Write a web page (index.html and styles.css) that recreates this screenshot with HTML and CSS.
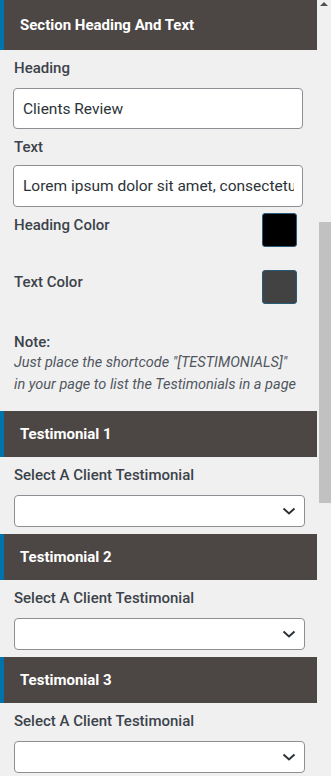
FILE: index.html
```html
<!DOCTYPE html>
<html lang="en">
<head>
    <meta charset="UTF-8">
    <meta name="viewport" content="width=device-width, initial-scale=1.0">
    <title>Testimonials</title>
    <link rel="stylesheet" href="styles.css">
</head>
<body>
    <div class="customizer">
        <div class="panel">
            <div class="section-title first">Section Heading And Text</div>
            <div class="field">
                <label class="field-label" for="heading">Heading</label>
                <input class="text-input" type="text" id="heading" value="Clients Review">
            </div>
            <div class="field">
                <label class="field-label" for="text">Text</label>
                <input class="text-input" type="text" id="text" value="Lorem ipsum dolor sit amet, consectetur adipiscing elit.">
            </div>
            <div class="color-row">
                <span class="field-label">Heading Color</span>
                <span class="swatch swatch-black"></span>
            </div>
            <div class="color-row">
                <span class="field-label">Text Color</span>
                <span class="swatch swatch-gray"></span>
            </div>
            <div class="note">
                <div class="field-label">Note:</div>
                <p>Just place the shortcode "[TESTIMONIALS]"<br>in your page to list the Testimonials in a page</p>
            </div>

            <div class="section-title">Testimonial 1</div>
            <div class="field">
                <label class="field-label" for="t1">Select A Client Testimonial</label>
                <div class="select-wrap">
                    <select id="t1"><option></option></select>
                    <svg class="chevron" width="14" height="8" viewBox="0 0 14 8"><path d="M1.5 1.5 L7 6.5 L12.5 1.5" fill="none" stroke="#2c3338" stroke-width="2"/></svg>
                </div>
            </div>

            <div class="section-title">Testimonial 2</div>
            <div class="field">
                <label class="field-label" for="t2">Select A Client Testimonial</label>
                <div class="select-wrap">
                    <select id="t2"><option></option></select>
                    <svg class="chevron" width="14" height="8" viewBox="0 0 14 8"><path d="M1.5 1.5 L7 6.5 L12.5 1.5" fill="none" stroke="#2c3338" stroke-width="2"/></svg>
                </div>
            </div>

            <div class="section-title">Testimonial 3</div>
            <div class="field">
                <label class="field-label" for="t3">Select A Client Testimonial</label>
                <div class="select-wrap">
                    <select id="t3"><option></option></select>
                    <svg class="chevron" width="14" height="8" viewBox="0 0 14 8"><path d="M1.5 1.5 L7 6.5 L12.5 1.5" fill="none" stroke="#2c3338" stroke-width="2"/></svg>
                </div>
            </div>
        </div>
        <div class="scrollbar">
            <div class="scroll-arrow"></div>
            <div class="scroll-thumb"></div>
        </div>
    </div>
</body>
</html>
```

FILE: styles.css
```css
* {
    box-sizing: border-box;
}

html,
body {
    margin: 0;
    padding: 0;
    height: 776px;
    overflow: hidden;
}

body {
    background: #f0f0f1;
    font-family: Roboto, "Noto Sans", sans-serif;
    color: #3c434a;
}

.customizer {
    display: flex;
    height: 776px;
}

.panel {
    width: 317px;
    flex: none;
}

.section-title {
    height: 46px;
    display: flex;
    align-items: center;
    padding-left: 16px;
    margin-top: 15px;
    background: #4c4744;
    border-left: 4px solid #0073aa;
    color: #fff;
    font-size: 15px;
    font-weight: 700;
}

.section-title.first {
    height: 50px;
    margin-top: 0;
}

.field {
    padding: 8px 14px 0 13px;
}

.field + .section-title {
    margin-top: 7px;
}

.field-label {
    display: block;
    font-size: 15px;
    line-height: 20px;
    font-weight: 500;
    color: #3c434a;
    padding-left: 1px;
}

.text-input {
    display: block;
    width: 100%;
    height: 41px;
    margin-top: 10px;
    padding: 0 8px 0 9px;
    border: 1px solid #8c8f94;
    border-radius: 4px;
    background: #fff;
    font-family: Roboto, sans-serif;
    font-size: 15.5px;
    color: #2c3338;
}

.field + .field .text-input {
    margin-top: 8px;
    height: 42px;
}

.color-row {
    display: flex;
    justify-content: space-between;
    align-items: flex-start;
    padding: 0 20px 0 13px;
    margin-top: 6px;
}

.color-row .field-label {
    padding-top: 2px;
}

.color-row + .color-row {
    margin-top: 23px;
}

.swatch {
    width: 35px;
    height: 34px;
    border-radius: 3px;
    border: 1px solid #2a5a7a;
}

.swatch-black {
    background: #000;
}

.swatch-gray {
    background: #424242;
}

.note {
    padding: 28px 0 0 13px;
}

.note p {
    margin: 0;
    padding-left: 1px;
    font-size: 14.5px;
    line-height: 22px;
    font-style: italic;
    color: #50575e;
    white-space: nowrap;
}

.select-wrap {
    position: relative;
    margin: 10px -2px 0 1px;
}

.select-wrap select {
    display: block;
    width: 100%;
    height: 32px;
    appearance: none;
    border: 1px solid #8c8f94;
    border-radius: 4px;
    background: #fff;
    font-family: Roboto, sans-serif;
    font-size: 15px;
}

.chevron {
    position: absolute;
    right: 9px;
    top: 12px;
    pointer-events: none;
}

.scrollbar {
    width: 14px;
    flex: none;
    display: flex;
    flex-direction: column;
    align-items: flex-end;
}

.scroll-arrow {
    width: 0;
    height: 0;
    margin: 2px 3px 0 0;
    border-left: 4px solid transparent;
    border-right: 4px solid transparent;
    border-bottom: 4px solid #505050;
}

.scroll-thumb {
    width: 12px;
    height: 281px;
    margin-top: 216px;
    background: #c1c1c1;
}
```
